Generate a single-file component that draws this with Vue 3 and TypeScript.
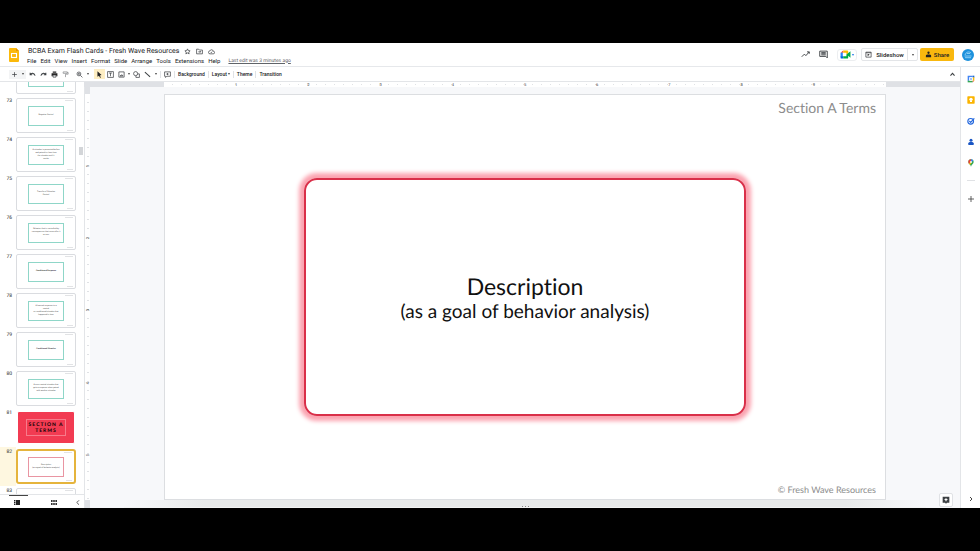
<script setup lang="ts">
interface Slide {
  number?: number
  lines: string[]
  kind?: 'section' | 'current'
  bold?: boolean
}

const menus: string[] = ['File', 'Edit', 'View', 'Insert', 'Format', 'Slide', 'Arrange', 'Tools', 'Extensions', 'Help']

const slides: Slide[] = [
  { lines: [] },
  { number: 73, lines: ['Negative Control'] },
  { number: 74, lines: ['A stimulus is presented before', 'and paired in close time', 'the stimulus until it', 'works'] },
  { number: 75, lines: ['Transfer of Stimulus', 'Control'] },
  { number: 76, lines: ['Behavior that is controlled by', 'consequences that come after it', 'occurs'] },
  { number: 77, lines: ['Conditioned Response'], bold: true },
  { number: 78, lines: ['A learned response to a', 'neutral', 'or conditioned stimulus that', 'happened in time'] },
  { number: 79, lines: ['Conditioned Stimulus'], bold: true },
  { number: 80, lines: ['A once neutral stimulus that', 'gets a response when paired', 'with another stimulus'] },
  { number: 81, lines: ['SECTION A', 'TERMS'], kind: 'section' },
  { number: 82, lines: ['Description', '(as a goal of behavior analysis)'], kind: 'current' },
  { number: 83, lines: [] },
]

const horizontalInches: number[] = [1, 2, 3, 4, 5, 6, 7, 8, 9]
const verticalInches: number[] = [1, 2, 3, 4, 5]
</script>

<template>
  <div class="letterbox">
    <div class="app">
      <header class="header">
        <svg class="logo" viewBox="0 0 10 14" aria-hidden="true">
          <path d="M1 0h6l3 3v10a1 1 0 0 1-1 1H1a1 1 0 0 1-1-1V1a1 1 0 0 1 1-1z" fill="#fbb90b" />
          <path d="M7 0l3 3H7z" fill="#e59500" />
          <rect x="2.5" y="5.5" width="5" height="4" fill="none" stroke="#fff" stroke-width="1.1" />
        </svg>
        <div class="doc">
          <div class="title-row">
            <h1>BCBA Exam Flash Cards - Fresh Wave Resources</h1>
            <button class="icon" aria-label="Star">
              <svg viewBox="0 0 24 24"><path d="M12 3l2.7 6 6.3.6-4.800 4.300 1.400 6.400L12 17l-5.600 3.300 1.400-6.400L3 9.600 9.300 9z" /></svg>
            </button>
            <button class="icon" aria-label="Move">
              <svg viewBox="0 0 24 24"><path d="M2 4h7l3 3h10v13H2zM8 13h8M13 10l3 3-3 3" /></svg>
            </button>
            <button class="icon" aria-label="Saved to cloud">
              <svg viewBox="0 0 24 24"><path d="M7 20a5 5 0 0 1-.6-10A6 6 0 0 1 18 11a4.500 4.500 0 0 1 0 9zM9 14l2 2 4-4" /></svg>
            </button>
          </div>
          <nav class="menus">
            <button v-for="menu in menus" :key="menu">{{ menu }}</button>
            <a href="#" class="edited">Last edit was 3 minutes ago</a>
          </nav>
        </div>
        <div class="actions">
          <button class="icon large" aria-label="Activity">
            <svg viewBox="0 0 24 24"><path d="M2 18l7-7 4 4 9-10M16 5h6v5" /></svg>
          </button>
          <button class="icon large" aria-label="Comments">
            <svg viewBox="0 0 24 24"><path d="M2 3h20v18l-4-4H2zM6 7h12M6 10h12M6 13h12" /></svg>
          </button>
          <button class="meet" aria-label="Meet">
            <svg class="camera" viewBox="0 0 24 20">
              <path d="M1 6l6-5v5z" fill="#ea4335" />
              <path d="M1 6h5v9H1z" fill="#2684fc" />
              <path d="M1 14h6v5H3a2 2 0 0 1-2-2z" fill="#0066da" />
              <path d="M7 1h9a2 2 0 0 1 2 2v5l-4 2V6H7z" fill="#ffba00" />
              <path d="M7 14h7v-4l9-7v14l-5-4v4a2 2 0 0 1-2 2H7z" fill="#00ac47" />
            </svg>
            <span class="caret blue"></span>
          </button>
          <div class="split">
            <button class="slideshow">
              <svg viewBox="0 0 24 24"><path d="M3 4h18v17H3zM3 6h18" /><path class="solid" d="M9 9l7 4-7 4z" /></svg>
              Slideshow
            </button>
            <button class="more" aria-label="Slideshow options"><span class="caret"></span></button>
          </div>
          <button class="share">
            <svg viewBox="0 0 24 24"><circle class="solid" cx="12" cy="6" r="4" /><path class="solid" d="M3 21v-5c0-3 4-4 9-4s9 1 9 4v5z" /></svg>
            Share
          </button>
          <button class="avatar" aria-label="Account">
            <svg viewBox="0 0 12 12">
              <circle cx="6" cy="6" r="6" fill="#1d91dc" />
              <path d="M3 6c1-3 4-4 6-2M2.500 7h7M3 8.700h6M5 4.500h3" stroke="#a6dcfa" stroke-width=".8" fill="none" />
            </svg>
          </button>
        </div>
      </header>

      <div class="workspace">
        <div class="editor">
          <div class="toolbar" role="toolbar">
            <div class="new">
              <button class="tool" aria-label="New slide"><svg viewBox="0 0 24 24"><path d="M12 4v16M4 12h16" /></svg></button>
              <button class="drop" aria-label="Layouts"><span class="caret"></span></button>
            </div>
            <button class="tool" aria-label="Undo"><svg viewBox="0 0 24 24"><path class="thick" d="M4 6v7h7M4 13c4-7 13-7 17 3" /></svg></button>
            <button class="tool" aria-label="Redo"><svg viewBox="0 0 24 24"><path class="thick" d="M20 6v7h-7M20 13C16 6 7 6 3 16" /></svg></button>
            <button class="tool" aria-label="Print"><svg viewBox="0 0 24 24"><path class="solid" d="M6 2h12v4H6zM2 8h20v10h-4v-4H6v4H2z" /><path d="M7 14h10v7H7z" /></svg></button>
            <button class="tool pale" aria-label="Paint format"><svg viewBox="0 0 24 24"><path d="M4 3h14v5H4zM18 5h3v6h-9v10" /></svg></button>
            <div class="group">
              <button class="tool" aria-label="Zoom"><svg viewBox="0 0 24 24"><circle cx="10" cy="10" r="6.500" /><path d="M15 15l7 7M7 10h6M10 7v6" /></svg></button>
              <button class="drop" aria-label="Zoom options"><span class="caret"></span></button>
            </div>
            <button class="tool active" aria-label="Select"><svg viewBox="0 0 24 24"><path class="solid" d="M5 1l14 13-6 1 4 7-3 1-4-7-5 4z" /></svg></button>
            <button class="tool" aria-label="Text box"><svg viewBox="0 0 24 24"><path d="M2 2h20v20H2zM7 7h10M12 7v11" /></svg></button>
            <button class="tool" aria-label="Image"><svg viewBox="0 0 24 24"><path d="M3 3h18v18H3zM7 17h10l-3-4z" /></svg></button>
            <button class="drop tight" aria-label="Image options"><span class="caret"></span></button>
            <button class="tool" aria-label="Shape"><svg viewBox="0 0 24 24"><circle cx="9" cy="9" r="7" /><path d="M15 10h7v12H10v-6" /></svg></button>
            <button class="tool" aria-label="Line"><svg viewBox="0 0 24 24"><path class="thick" d="M3 4l18 16" /></svg></button>
            <button class="drop" aria-label="Line options"><span class="caret"></span></button>
            <span class="rule"></span>
            <button class="tool" aria-label="Add comment"><svg viewBox="0 0 24 24"><path d="M2 3h20v15H10l-5 4v-4H2zM12 7v7M8 10.500h8" /></svg></button>
            <span class="rule"></span>
            <button class="word">Background</button>
            <span class="rule"></span>
            <button class="word">Layout<span class="caret"></span></button>
            <span class="rule"></span>
            <button class="word">Theme</button>
            <span class="rule"></span>
            <button class="word">Transition</button>
            <button class="tool collapse" aria-label="Hide menus"><svg viewBox="0 0 24 24"><path class="thick" d="M5 16l7-8 7 8" /></svg></button>
          </div>

          <div class="body">
            <aside class="filmstrip">
              <div class="strip">
                <ol>
                  <li v-for="(slide, index) in slides" :key="index" :class="slide.kind">
                    <span class="number">{{ slide.number }}</span>
                    <div class="thumb">
                      <span class="thumb-mark"></span>
                      <div class="card" :class="{ bold: slide.bold }">
                        <span v-for="line in slide.lines" :key="line">{{ line }}</span>
                      </div>
                      <span class="thumb-mark low"></span>
                    </div>
                  </li>
                </ol>
                <div class="scroll"></div>
              </div>
              <div class="views">
                <div class="view-mark"></div>
                <div class="view-buttons">
                  <button aria-label="Filmstrip view"><svg viewBox="0 0 6 5"><path d="M0 0h1.500v1.300H0zM0 1.800h1.500v1.300H0zM0 3.600h1.500V5H0zM2 0h4v5H2z" fill="#222" /></svg></button>
                  <button aria-label="Grid view"><svg viewBox="0 0 6 5"><path d="M0 0h1.600v2H0zM2.200 0h1.600v2H2.200zM4.400 0H6v2H4.400zM0 3h1.600v2H0zM2.200 3h1.600v2H2.200zM4.400 3H6v2H4.400z" fill="#333" /></svg></button>
                  <button aria-label="Hide filmstrip"><svg viewBox="0 0 6 5"><path d="M4 .3L1.800 2.500 4 4.700" fill="none" stroke="#333" stroke-width=".8" /></svg></button>
                </div>
              </div>
            </aside>

            <div class="ruler-top">
              <div class="track">
                <span class="half"></span>
                <span v-for="inch in horizontalInches" :key="inch" class="inch">{{ inch }}</span>
                <span class="half"></span>
              </div>
            </div>
            <div class="ruler-side">
              <div class="track">
                <span class="half"></span>
                <span v-for="inch in verticalInches" :key="inch" class="inch">{{ inch }}</span>
                <span class="rest"></span>
              </div>
            </div>

            <main class="stage">
              <section class="slide">
                <p class="slide-header">Section A Terms</p>
                <div class="frame">
                  <h2>Description</h2>
                  <p>(as a goal of behavior analysis)</p>
                </div>
                <p class="slide-footer">© Fresh Wave Resources</p>
              </section>
              <div class="notes"><i></i><i></i><i></i></div>
              <button class="explore" aria-label="Explore">
                <svg viewBox="0 0 24 24"><path d="M2 2h20v18h-7l-3 3-3-3H2z" fill="#3c4043" /><path d="M12 5l2 4 4 2-4 2-2 4-2-4-4-2 4-2z" fill="#fff" /></svg>
              </button>
            </main>
          </div>
        </div>

        <aside class="rail">
          <button aria-label="Calendar"><svg viewBox="0 0 24 24"><path d="M2 2h15v5H7v10H2z" fill="#4285f4" /><path d="M17 2h5v6h-5z" fill="#1967d2" /><path d="M17 7h5v10h-5z" fill="#fbbc04" /><path d="M2 17h15v5H2z" fill="#34a853" /><path d="M17 17h5l-5 5z" fill="#ea4335" /><path d="M7 7h10v10H7z" fill="#fff" /><path d="M10 10h4v4h-4z" fill="#4285f4" /></svg></button>
          <button aria-label="Keep"><svg viewBox="0 0 24 24"><rect x="1" y="1" width="22" height="22" rx="2" fill="#fbb400" /><circle cx="12" cy="10" r="5" fill="#fff" /><path d="M9 14h6v4H9z" fill="#fff" /></svg></button>
          <button aria-label="Tasks"><svg viewBox="0 0 24 24"><circle cx="11" cy="13" r="8.500" fill="none" stroke="#2468de" stroke-width="3.500" /><path d="M7 12l4 4L22 4" fill="none" stroke="#2468de" stroke-width="3.500" /></svg></button>
          <button aria-label="Contacts"><svg viewBox="0 0 24 24"><circle cx="12" cy="7" r="4.500" fill="#1a56c4" /><path d="M4 21v-5c0-3 4-4 8-4s8 1 8 4v5z" fill="#1a56c4" /></svg></button>
          <button aria-label="Maps"><svg viewBox="0 0 24 24"><path d="M12 23C11 17 4 14 4 9a8 8 0 0 1 16 0c0 5-7 8-8 14z" fill="#34a853" /><path d="M4 9a8 8 0 0 1 8-8v8l-6 6C5 13 4 11 4 9z" fill="#ea4335" /><path d="M12 1a8 8 0 0 1 7 4l-7 5z" fill="#4285f4" /><path d="M6 14l6-6 2 3-5 6z" fill="#fbbc04" /><circle cx="12" cy="9" r="2.800" fill="#fff" /></svg></button>
          <hr />
          <button aria-label="Get add-ons"><svg viewBox="0 0 24 24"><path d="M12 3v18M3 12h18" fill="none" stroke="#444" stroke-width="2.500" /></svg></button>
          <button class="fold" aria-label="Hide side panel"><svg viewBox="0 0 24 24"><path d="M9 6l6 6-6 6" fill="none" stroke="#444" stroke-width="3" /></svg></button>
        </aside>
      </div>
    </div>
  </div>
</template>

<style>
body {
  margin: 0;
  background: #000;
}
</style>

<style scoped>
* {
  box-sizing: border-box;
}
.letterbox {
  display: flex;
  height: 100vh;
  padding: 43px 0;
  background: #000;
  font-family: Roboto, "Liberation Sans", sans-serif;
  color: #202124;
  text-rendering: geometricPrecision;
}
.app {
  display: flex;
  flex: 1;
  flex-direction: column;
  min-width: 0;
  background: #fff;
}
h1,
h2,
p,
ol {
  margin: 0;
  padding: 0;
  font-weight: 400;
}
button {
  display: flex;
  align-items: center;
  justify-content: center;
  flex: none;
  margin: 0;
  padding: 0;
  border: 0;
  background: none;
  color: inherit;
  font: inherit;
  white-space: nowrap;
}
svg {
  display: block;
  flex: none;
}
.icon svg,
.tool svg,
.slideshow svg,
.share svg {
  width: 7px;
  height: 7px;
  fill: none;
  stroke: #3c4043;
  stroke-width: 2.5;
}
svg .solid {
  fill: #222;
  stroke: none;
}
svg .thick {
  stroke-width: 3.5;
}
.caret {
  border: 1px solid transparent;
  border-top: 2px solid #444;
  border-bottom: 0;
}
.blue {
  border-top-color: #1a73e8;
}

/* Header */
.header {
  display: flex;
  align-items: center;
  height: 24px;
  padding: 0 6px 0 9px;
  border-bottom: 1px solid #e6e8eb;
}
.logo {
  width: 10px;
  height: 14px;
}
.doc {
  display: flex;
  flex-direction: column;
  gap: 1px;
  margin-left: 8px;
  padding-top: 2px;
}
.title-row {
  display: flex;
  align-items: center;
  gap: 5px;
  height: 9px;
  padding-left: 1px;
}
.title-row h1 {
  font-size: 7px;
  line-height: 9px;
  white-space: nowrap;
}
.menus {
  display: flex;
  gap: 4px;
  font-size: 6px;
  line-height: 8px;
}
.edited {
  margin-left: 4px;
  color: #5f6368;
  font-size: 5px;
  white-space: nowrap;
}
.actions {
  display: flex;
  align-items: center;
  margin-left: auto;
  font-size: 6px;
  font-weight: 500;
}
.icon.large {
  margin-right: 9px;
}
.icon.large svg {
  width: 9px;
  height: 9px;
}
.meet {
  gap: 1px;
  width: 20px;
  height: 12px;
  margin-right: 4px;
  border: 1px solid #eceef0;
  border-radius: 3px;
}
.camera {
  width: 11px;
  height: 9px;
}
.split {
  display: flex;
  height: 13px;
  margin-right: 2px;
  border: 1px solid #e3e5e8;
  border-radius: 2px;
}
.slideshow {
  gap: 4px;
  width: 45px;
}
.more {
  width: 10px;
  border-left: 1px solid #e3e5e8;
}
.share {
  gap: 2px;
  width: 34px;
  height: 13px;
  margin-right: 8px;
  border-radius: 2px;
  background: #f9b80e;
}
.avatar svg {
  width: 12px;
  height: 12px;
}

/* Workspace */
.workspace {
  display: flex;
  flex: 1;
  min-height: 0;
}
.editor {
  display: flex;
  flex: 1;
  flex-direction: column;
  min-width: 0;
}
.toolbar {
  display: flex;
  align-items: center;
  height: 15px;
  padding: 0 2px 0 9px;
  border-bottom: 1px solid #e3e5e8;
  font-size: 5px;
  font-weight: 500;
}
.new,
.group {
  display: flex;
  flex: none;
  align-items: center;
  margin-right: 1px;
}
.new {
  height: 9px;
  background: #f3f4f5;
}
.tool {
  width: 11px;
  height: 10px;
}
.pale {
  opacity: 0.6;
}
.drop {
  width: 6px;
  height: 10px;
}
.group {
  margin: 0 3px;
}
.tight {
  width: 4px;
}
.active {
  background: #feeec3;
}
.rule {
  width: 1px;
  height: 7px;
  margin: 0 1px;
  background: #e0e2e5;
}
.word {
  gap: 1px;
  padding: 0 2px;
}
.collapse {
  margin-left: auto;
}
.body {
  display: grid;
  flex: 1;
  grid-template-rows: 5px minmax(0, 1fr);
  grid-template-columns: 84px 6px minmax(0, 1fr);
  min-height: 0;
}

/* Filmstrip */
.filmstrip {
  display: flex;
  grid-row: 1 / 3;
  flex-direction: column;
  min-height: 0;
}
.strip {
  display: flex;
  flex: 1;
  min-height: 0;
  overflow: hidden;
}
ol {
  width: 76px;
  margin-top: -25px;
  list-style: none;
}
li {
  display: flex;
  height: 39px;
  padding-top: 2px;
}
.number {
  width: 16px;
  padding-right: 4px;
  font-size: 5px;
  line-height: 6px;
  text-align: right;
}
.thumb {
  display: flex;
  flex-direction: column;
  align-items: center;
  justify-content: space-between;
  width: 60px;
  height: 35px;
  padding: 1px 2px;
  border: 1px solid #dadce0;
  border-radius: 2px;
  background: #fff;
}
.thumb-mark {
  align-self: flex-end;
  width: 8px;
  height: 1px;
  background: #e2e3e5;
}
.thumb-mark.low {
  width: 6px;
}
.card {
  display: flex;
  flex-direction: column;
  align-items: center;
  justify-content: center;
  width: 36px;
  height: 20px;
  border: 1px solid #8fd6c8;
  color: #444;
  font-size: 2px;
  line-height: 3px;
  white-space: nowrap;
}
.card.bold {
  font-weight: 700;
}
.section .thumb {
  justify-content: center;
  width: 58px;
  height: 33px;
  margin: 1px;
  border-color: #fff;
  background: #f23b52;
}
.section .thumb-mark {
  display: none;
}
.section .card {
  width: 40px;
  height: 17px;
  border-color: #f77b8b;
  color: #180508;
  font-family: Lato, "Liberation Sans", sans-serif;
  font-size: 5px;
  font-weight: 900;
  line-height: 6px;
  letter-spacing: 1px;
}
.current {
  background: linear-gradient(90deg, #fef7e0 16px, #fff 16px);
}
.current .thumb {
  border: 2px solid #e5b43c;
  border-radius: 3px;
}
.current .card {
  border-color: #e995a2;
}
.scroll {
  width: 4px;
  height: 8px;
  margin: 65px 0 0 3px;
  background: #d3d5d8;
}
.views {
  height: 14px;
  border-top: 1px solid #e3e5e8;
  background: #fff;
}
.view-mark {
  width: 19px;
  height: 1px;
  margin-left: 9px;
  background: #444;
}
.view-buttons {
  display: flex;
  align-items: center;
  gap: 31px;
  height: 12px;
  padding: 0 3px 0 14px;
}
.view-buttons button:last-child {
  margin-left: -13px;
}
.view-buttons svg {
  width: 6px;
  height: 5px;
}

/* Rulers */
.ruler-top {
  grid-column: 2 / 4;
  padding: 0 74px 0 80px;
  background: #dfe1e5;
}
.ruler-side {
  padding: 7px 0 8px;
  border-left: 1px solid #e3e5e8;
  background: #dfe1e5;
}
.track {
  display: flex;
  height: 100%;
  background: #fff;
  color: #333;
  font-size: 4px;
  line-height: 5px;
}
.ruler-side .track {
  flex-direction: column;
}
.track span {
  display: flex;
  flex: 8 1 0;
  align-items: center;
  justify-content: center;
  min-width: 0;
  min-height: 0;
}
.track .half {
  flex-grow: 4;
}
.track .rest {
  flex-grow: 1;
}
.ruler-top .track {
  background: repeating-linear-gradient(90deg, #fff 0 8px, #e0e2e5 8px 9px) 0 2px / 100% 1px no-repeat #fff;
}
.ruler-side .track {
  background: repeating-linear-gradient(#fff 0 8px, #e0e2e5 8px 9px) 2px 0 / 2px 100% no-repeat #fff;
}
.ruler-side .inch {
  writing-mode: vertical-rl;
  transform: rotate(180deg);
}

/* Slide */
.stage {
  position: relative;
  display: flex;
  flex-direction: column;
  min-height: 0;
  padding: 7px 74px 0;
  background: #f7f8fa;
}
.slide {
  display: grid;
  flex: 1;
  grid-template-rows: 1fr 60% 1fr;
  justify-items: center;
  min-height: 0;
  padding: 4px 9px;
  border: 1px solid #dcdee1;
  background: #fff;
  color: #8c8c8c;
  font-family: Lato, "Open Sans", sans-serif;
  font-variant-ligatures: none;
}
.slide-header,
.slide-footer {
  justify-self: end;
}
.slide-header {
  font-size: 14px;
  line-height: 17px;
}
.slide-footer {
  align-self: end;
  font-size: 9px;
  line-height: 11px;
}
.frame {
  display: flex;
  flex-direction: column;
  align-items: center;
  justify-content: center;
  width: 63%;
  border: 2px solid #d92f49;
  border-radius: 13px;
  box-shadow: 0 0 4px 5px #fba3b0;
  color: #111;
}
.frame h2 {
  font-size: 23px;
  line-height: 29px;
}
.frame p {
  font-size: 19px;
  line-height: 22px;
}
.notes {
  display: flex;
  flex: none;
  align-items: flex-end;
  justify-content: center;
  gap: 2px;
  height: 8px;
  margin: 0 -40px;
  border-bottom: 1px solid #f3f4f4;
  background: linear-gradient(90deg, transparent, #e8eaea 10%, #e8eaea 90%, transparent);
}
.notes i {
  width: 1px;
  height: 1px;
  background: #888;
}
.explore {
  position: absolute;
  right: 7px;
  bottom: 1px;
  width: 14px;
  height: 14px;
  border: 1px solid #e0e2e5;
  border-radius: 2px;
  background: #fff;
}
.explore svg {
  width: 8px;
  height: 8px;
}

/* Side panel */
.rail {
  display: flex;
  flex: none;
  flex-direction: column;
  align-items: center;
  width: 20px;
  padding: 1px 0 0 1px;
  border-left: 1px solid #e3e5e8;
}
.rail button {
  width: 18px;
  height: 21px;
}
.rail svg {
  width: 8px;
  height: 8px;
}
.rail hr {
  width: 8px;
  height: 1px;
  margin: 7px 0;
  border: 0;
  background: #e0e2e5;
}
.rail .fold {
  height: 18px;
  margin-top: auto;
}
</style>
